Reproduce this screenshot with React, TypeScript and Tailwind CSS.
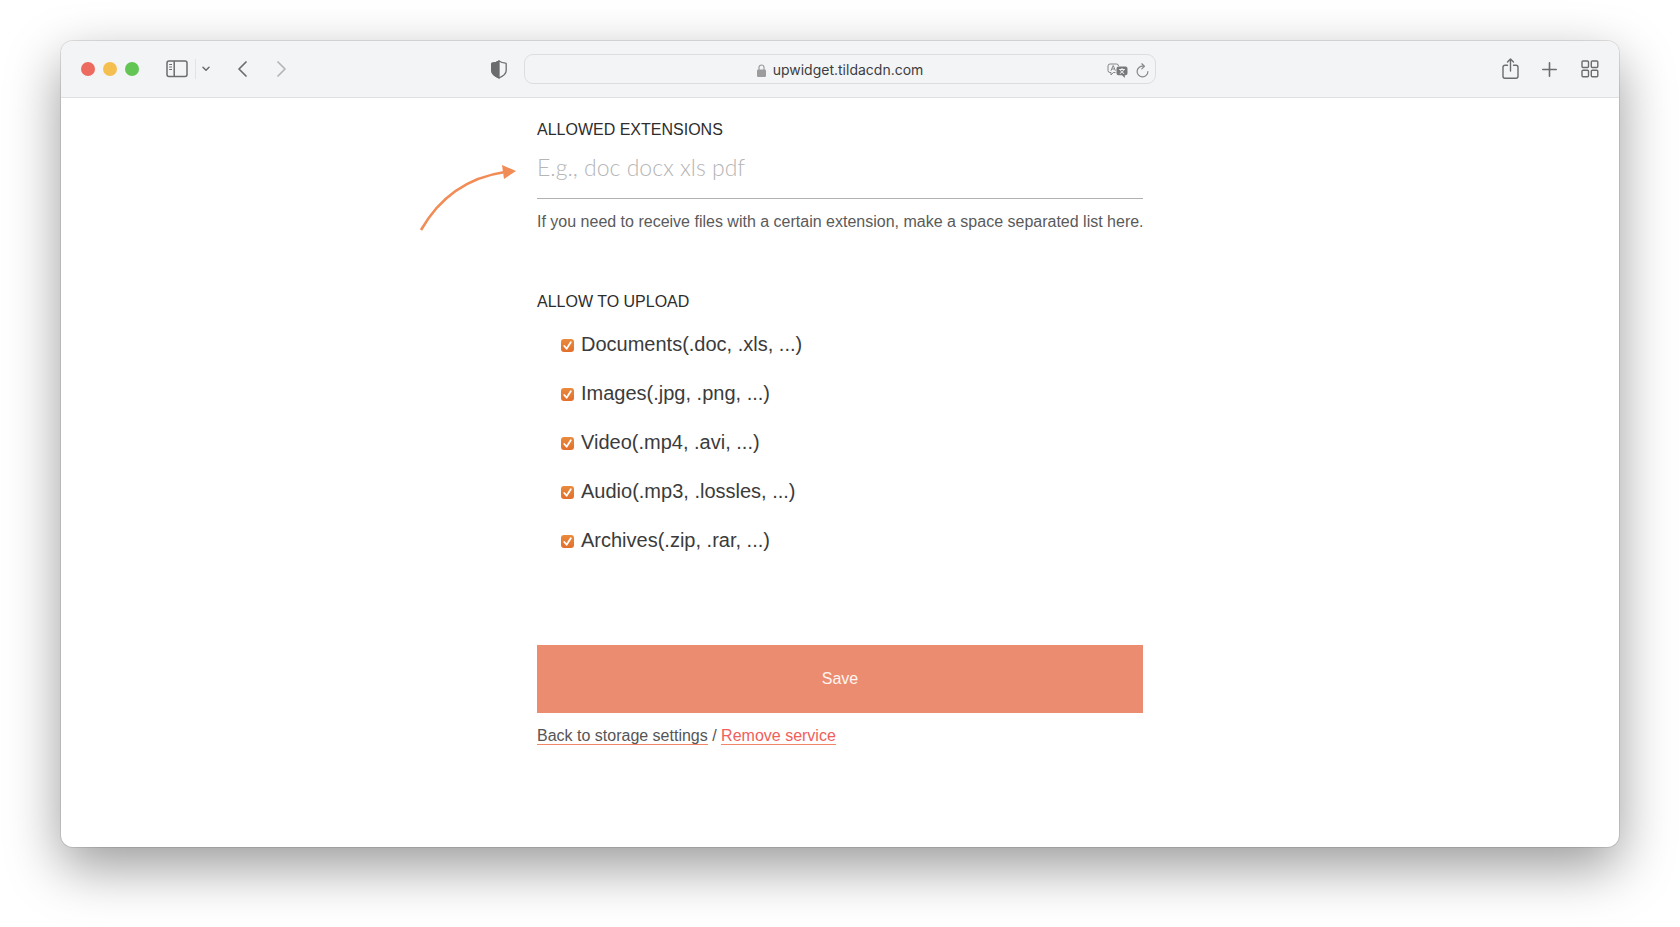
import React, { useState } from 'react';

interface FileType {
  id: string;
  label: string;
}

const FILE_TYPES: FileType[] = [
  { id: 'documents', label: 'Documents(.doc, .xls, ...)' },
  { id: 'images', label: 'Images(.jpg, .png, ...)' },
  { id: 'video', label: 'Video(.mp4, .avi, ...)' },
  { id: 'audio', label: 'Audio(.mp3, .lossles, ...)' },
  { id: 'archives', label: 'Archives(.zip, .rar, ...)' },
];

const IconButton = ({ label, className = '', children }: any) => (
  <button type="button" aria-label={label} className={`shrink-0 text-[#6b6c6e] ${className}`}>
    {children}
  </button>
);

const Toolbar = () => (
  <header className="grid h-[57px] grid-cols-[1fr_minmax(0,632px)_1fr] items-center border-b border-[#dfe0e2] bg-[#f3f4f6]">
    <div className="flex items-center pl-5 pr-[17px]">
      <div className="flex gap-2">
        <span className="size-3.5 rounded-full bg-[#ed6a5f]" />
        <span className="size-3.5 rounded-full bg-[#f5bf4f]" />
        <span className="size-3.5 rounded-full bg-[#62c554]" />
      </div>
      <IconButton label="Show sidebar" className="ml-[27px]">
        <svg width="22" height="18" viewBox="0 0 22 18" fill="none" stroke="currentColor" strokeWidth="1.5">
          <rect x="1" y="1" width="20" height="15.5" rx="2" />
          <path d="M8.2 1v15.5" />
          <path d="M3.2 4.5h2.8M3.2 7h2.8M3.2 9.5h2.8" strokeWidth="1" />
        </svg>
      </IconButton>
      <span className="ml-[7px] h-5 w-px bg-[#e2e3e5]" />
      <IconButton label="Sidebar options" className="ml-1.5">
        <svg width="8" height="6" viewBox="0 0 8 6" fill="none" stroke="currentColor" strokeWidth="1.5" strokeLinecap="round" strokeLinejoin="round">
          <path d="M1 1.2l3 3 3-3" />
        </svg>
      </IconButton>
      <IconButton label="Back" className="ml-7">
        <svg width="9" height="16" viewBox="0 0 9 16" fill="none" stroke="currentColor" strokeWidth="1.7" strokeLinecap="round" strokeLinejoin="round">
          <path d="M8 1L1 8l7 7" />
        </svg>
      </IconButton>
      <IconButton label="Forward" className="ml-[30px]">
        <svg width="9" height="16" viewBox="0 0 9 16" fill="none" stroke="#b4b5b7" strokeWidth="1.7" strokeLinecap="round" strokeLinejoin="round">
          <path d="M1 1l7 7-7 7" />
        </svg>
      </IconButton>
      <IconButton label="Privacy report" className="ml-auto">
        <svg width="16" height="19" viewBox="0 0 16 19" fill="none" stroke="currentColor" strokeWidth="1.3" strokeLinejoin="round">
          <path d="M8 1c2 1.3 4.4 2 6.6 2.2.4 0 .6.3.6.7v6.6c0 3.5-3 5.6-7.2 7.5C3.8 16.1.8 14 .8 10.5V3.9c0-.4.2-.7.6-.7C3.6 3 6 2.3 8 1z" />
          <path d="M8 1v17C3.8 16.1.8 14 .8 10.5V3.9c0-.4.2-.7.6-.7C3.6 3 6 2.3 8 1z" fill="currentColor" />
        </svg>
      </IconButton>
    </div>

    <div className="grid h-[30px] grid-cols-[1fr_auto_1fr] items-center rounded-[9px] border border-[#dcdde0] px-1.5 pt-0.5">
      <span />
      <div className="flex items-center gap-[7px]">
        <svg width="9" height="13" viewBox="0 0 9 13" fill="none">
          <path d="M2 6V3.5a2.5 2.5 0 0 1 5 0V6" stroke="#9c9c9d" strokeWidth="1.2" />
          <rect y="5.5" width="9" height="7.5" rx="1.2" fill="#9c9c9d" />
        </svg>
        <span className="font-['Inter',sans-serif] text-sm leading-5 text-[#3c3d3f]">upwidget.tildacdn.com</span>
      </div>
      <div className="flex items-center justify-end gap-2">
        <IconButton label="Translate">
          <svg width="21" height="15" viewBox="0 0 21 15" fill="none" stroke="#858688">
            <path d="M8.5 9.5H6.3L4 12V9.5H3A2 2 0 0 1 1 7.5V3a2 2 0 0 1 2-2h6.5a2 2 0 0 1 2 2" />
            <path d="M4 7.7L6.2 2.5l2.2 5.2M4.8 6h2.9" />
            <path d="M11.5 3.5h7a2 2 0 0 1 2 2v4.7a2 2 0 0 1-2 2h-.7V15l-2.8-2.8h-3.5a2 2 0 0 1-2-2V5.5a2 2 0 0 1 2-2z" fill="#78797b" stroke="none" />
            <path d="M12.2 6.5h5.6M15 5v1.5M16.8 6.5c-.5 1.8-2 3.3-4 4M13.2 6.5c.5 1.8 2 3.3 4 4" stroke="#f3f4f6" />
          </svg>
        </IconButton>
        <IconButton label="Reload">
          <svg width="13" height="15" viewBox="0 0 13 15" fill="none" stroke="#858688" strokeWidth="1.2" strokeLinecap="round" strokeLinejoin="round">
            <path d="M7.5 3.2A5.4 5.4 0 1 0 11.9 8.5" />
            <path d="M5.8.8l2.6 2.5-2.6 2.6" />
          </svg>
        </IconButton>
      </div>
    </div>

    <div className="flex items-center justify-end pr-5">
      <IconButton label="Share">
        <svg width="17" height="22" viewBox="0 0 17 22" fill="none" stroke="currentColor" strokeWidth="1.4" strokeLinecap="round" strokeLinejoin="round">
          <path d="M5.5 7.2H3a2 2 0 0 0-2 2v9a2 2 0 0 0 2 2h11a2 2 0 0 0 2-2v-9a2 2 0 0 0-2-2h-2.5" />
          <path d="M8.5 13V1.2M5.5 4l3-3 3 3" />
        </svg>
      </IconButton>
      <IconButton label="New tab" className="ml-[23px]">
        <svg width="15" height="15" viewBox="0 0 15 15" fill="none" stroke="currentColor" strokeWidth="1.6" strokeLinecap="round">
          <path d="M7.5.8v13.4M.8 7.5h13.4" />
        </svg>
      </IconButton>
      <IconButton label="Tab overview" className="ml-6">
        <svg width="18" height="18" viewBox="0 0 18 18" fill="none" stroke="currentColor" strokeWidth="1.4">
          <rect x="1" y="1" width="6.5" height="6.5" rx="1" />
          <rect x="10.3" y="1" width="6.5" height="6.5" rx="1" />
          <rect x="1" y="10.2" width="6.5" height="6.5" rx="1" />
          <rect x="10.3" y="10.2" width="6.5" height="6.5" rx="1" />
        </svg>
      </IconButton>
    </div>
  </header>
);

const TypeCheckbox = ({ type, checked, onChange }: any) => (
  <li className="flex h-[49px] items-center gap-[7px] pl-6">
    <span className="mt-1 grid size-[13px] shrink-0">
      <input
        id={type.id}
        type="checkbox"
        checked={checked}
        onChange={onChange}
        className="peer col-start-1 row-start-1 size-[13px] appearance-none rounded-[3px] border border-[#c9c9c9] checked:border-0 checked:bg-linear-to-b checked:from-[#e98a3c] checked:to-[#e26f2c]"
      />
      <svg viewBox="0 0 13 13" className="pointer-events-none col-start-1 row-start-1 hidden size-[13px] peer-checked:block" fill="none" stroke="#fff" strokeWidth="1.8" strokeLinecap="round" strokeLinejoin="round">
        <path d="M3.3 7l2.3 2.7 4.2-6.4" />
      </svg>
    </span>
    <label htmlFor={type.id} className="text-xl leading-6 text-[#3b3b3b]">{type.label}</label>
  </li>
);

export default function App() {
  const [extensions, setExtensions] = useState('');
  const [allowed, setAllowed] = useState<string[]>(FILE_TYPES.map(t => t.id));

  const toggle = (id: string) => {
    setAllowed(prev => (prev.includes(id) ? prev.filter(x => x !== id) : [...prev, id]));
  };

  return (
    <div className="min-h-screen bg-white px-[61px] pb-20 pt-[41px] font-['Liberation_Sans',Arial,sans-serif]">
      <div className="overflow-hidden rounded-xl bg-white shadow-[0_0_0_1px_rgba(0,0,0,0.1),0_20px_54px_rgba(0,0,0,0.4)]">
        <Toolbar />

        <main className="px-6 pb-[99px] pt-5">
          <form className="mx-auto max-w-[606px]" onSubmit={e => e.preventDefault()}>
            <div className="relative">
              <label htmlFor="extensions" className="block text-base leading-6 text-[#2d2d2d]">ALLOWED EXTENSIONS</label>
              <input
                id="extensions"
                type="text"
                value={extensions}
                onChange={e => setExtensions(e.target.value)}
                placeholder="E.g., doc docx xls pdf"
                className="block h-[57px] w-full border-b border-[#b0b0b0] pb-1.5 font-['Lato',sans-serif] text-[23px] font-light text-[#333] outline-none placeholder:text-[#b5b5b5]"
              />
              {/* pointer to the extensions field */}
              <svg width="98" height="66" viewBox="0 0 98 66" className="absolute right-full top-[47px] mr-5" fill="none">
                <path d="M2 65C22 30 52 12 86 7" stroke="#f28c56" strokeWidth="2.6" />
                <path d="M83 0l14 6-12 8z" fill="#f28c56" />
              </svg>
            </div>
            <p className="mt-[11px] text-base leading-6 text-[#5a5a5a] sm:whitespace-nowrap">
              If you need to receive files with a certain extension, make a space separated list here.
            </p>

            <fieldset className="mt-14">
              <legend className="text-base leading-6 text-[#2d2d2d]">ALLOW TO UPLOAD</legend>
              <ul className="pt-[5px]">
                {FILE_TYPES.map(type => (
                  <TypeCheckbox key={type.id} type={type} checked={allowed.includes(type.id)} onChange={() => toggle(type.id)} />
                ))}
              </ul>
            </fieldset>

            <button type="submit" className="mt-[81px] block h-[68px] w-full bg-[#eb8c70] text-base text-[#fff5f0]">Save</button>

            <p className="mt-[11px] text-base leading-6 text-[#555]">
              <a href="#storage" className="border-b border-[#f08568]">Back to storage settings</a>
              {' / '}
              <a href="#remove" className="border-b border-[#f08568] text-[#f0605a]">Remove service</a>
            </p>
          </form>
        </main>
      </div>
    </div>
  );
}
